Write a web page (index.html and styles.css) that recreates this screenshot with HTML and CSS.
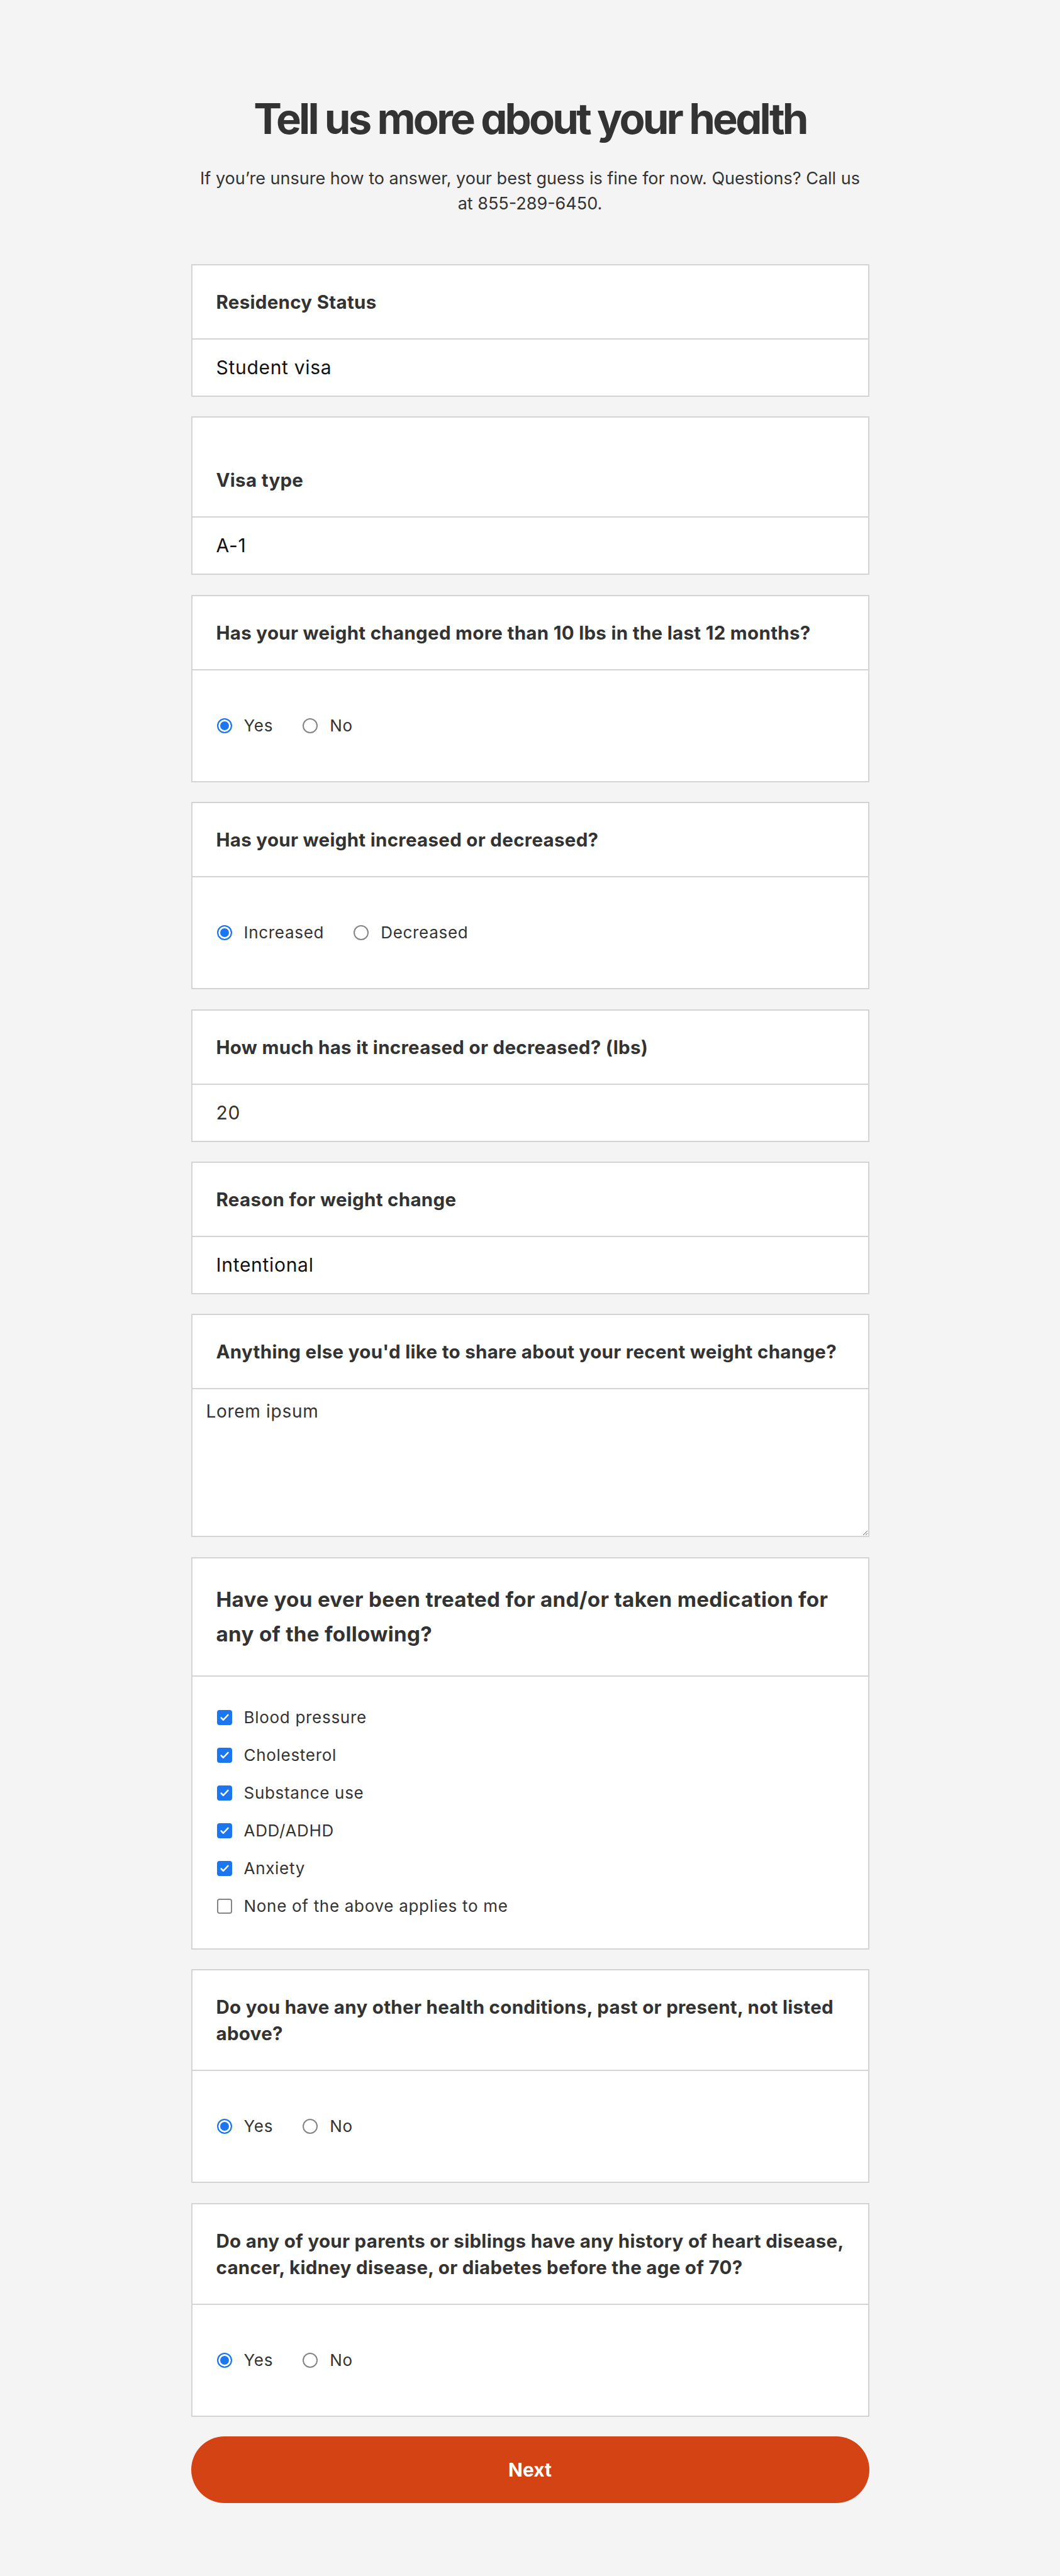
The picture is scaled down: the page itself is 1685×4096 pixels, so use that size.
FILE: index.html
```html
<!DOCTYPE html>
<html lang="en">
<head>
<meta charset="utf-8">
<title>Tell us more about your health</title>
<link rel="stylesheet" href="styles.css">
</head>
<body>
<main class="page">
  <header class="intro">
    <h1 class="title">Tell us more about your health</h1>
    <p class="subtitle">If you’re unsure how to answer, your best guess is fine for now. Questions? Call us at 855-289-6450.</p>
  </header>
  <form class="form">
    <section class="card">
      <div class="card-head"><h2 class="label">Residency Status</h2></div>
      <div class="value">Student visa</div>
    </section>
    <section class="card">
      <div class="card-head card-head--tall"><h2 class="label">Visa type</h2></div>
      <div class="value">A-1</div>
    </section>
    <section class="card">
      <div class="card-head"><h2 class="label">Has your weight changed more than 10 lbs in the last 12 months?</h2></div>
      <div class="choices">
        <label class="choice"><span class="radio is-on"></span>Yes</label>
        <label class="choice"><span class="radio"></span>No</label>
      </div>
    </section>
    <section class="card">
      <div class="card-head"><h2 class="label">Has your weight increased or decreased?</h2></div>
      <div class="choices">
        <label class="choice"><span class="radio is-on"></span>Increased</label>
        <label class="choice"><span class="radio"></span>Decreased</label>
      </div>
    </section>
    <section class="card">
      <div class="card-head"><h2 class="label">How much has it increased or decreased? (lbs)</h2></div>
      <div class="value value--num">20</div>
    </section>
    <section class="card">
      <div class="card-head"><h2 class="label">Reason for weight change</h2></div>
      <div class="value">Intentional</div>
    </section>
    <section class="card">
      <div class="card-head"><h2 class="label">Anything else you'd like to share about your recent weight change?</h2></div>
      <textarea class="note">Lorem ipsum</textarea>
    </section>
    <section class="card">
      <div class="card-head card-head--lg"><h2 class="label label--lg">Have you ever been treated for and/or taken medication for any of the following?</h2></div>
      <div class="checks">
        <label class="choice"><span class="box is-on"><svg viewBox="0 0 24 24" width="20" height="20"><path d="M5.5 12.5l4 4L18.5 7" fill="none" stroke="#fff" stroke-width="3" stroke-linecap="round" stroke-linejoin="round"/></svg></span>Blood pressure</label>
        <label class="choice"><span class="box is-on"><svg viewBox="0 0 24 24" width="20" height="20"><path d="M5.5 12.5l4 4L18.5 7" fill="none" stroke="#fff" stroke-width="3" stroke-linecap="round" stroke-linejoin="round"/></svg></span>Cholesterol</label>
        <label class="choice"><span class="box is-on"><svg viewBox="0 0 24 24" width="20" height="20"><path d="M5.5 12.5l4 4L18.5 7" fill="none" stroke="#fff" stroke-width="3" stroke-linecap="round" stroke-linejoin="round"/></svg></span>Substance use</label>
        <label class="choice"><span class="box is-on"><svg viewBox="0 0 24 24" width="20" height="20"><path d="M5.5 12.5l4 4L18.5 7" fill="none" stroke="#fff" stroke-width="3" stroke-linecap="round" stroke-linejoin="round"/></svg></span>ADD/ADHD</label>
        <label class="choice"><span class="box is-on"><svg viewBox="0 0 24 24" width="20" height="20"><path d="M5.5 12.5l4 4L18.5 7" fill="none" stroke="#fff" stroke-width="3" stroke-linecap="round" stroke-linejoin="round"/></svg></span>Anxiety</label>
        <label class="choice"><span class="box"></span>None of the above applies to me</label>
      </div>
    </section>
    <section class="card">
      <div class="card-head"><h2 class="label">Do you have any other health conditions, past or present, not listed above?</h2></div>
      <div class="choices">
        <label class="choice"><span class="radio is-on"></span>Yes</label>
        <label class="choice"><span class="radio"></span>No</label>
      </div>
    </section>
    <section class="card">
      <div class="card-head"><h2 class="label">Do any of your parents or siblings have any history of heart disease, cancer, kidney disease, or diabetes before the age of 70?</h2></div>
      <div class="choices">
        <label class="choice"><span class="radio is-on"></span>Yes</label>
        <label class="choice"><span class="radio"></span>No</label>
      </div>
    </section>
    <button type="button" class="next">Next</button>
  </form>
</main>
</body>
</html>
```

FILE: styles.css
```css
* { box-sizing: border-box; }
html, body { margin: 0; background: #f4f4f4; }
body { font-family: Inter, "Noto Sans", sans-serif; color: #333; }

.page { width: 1078px; margin: 0 auto; padding: 149px 0 110px; }

.intro { text-align: center; }
.title { margin: 0; font-size: 67px; line-height: 80px; font-weight: 700; letter-spacing: -3.8px; color: #333; font-feature-settings: "cv11" 1; }
.subtitle { margin: 35px 0 0; font-size: 27px; line-height: 40px; color: #333; }

.form { margin-top: 76px; display: flex; flex-direction: column; gap: 31.4px; }

.card { background: #fff; border: 2px solid #d4d4d4; }
.card-head { padding: 37px 20px 37px 38px; border-bottom: 2px solid #d4d4d4; }
.card-head--tall { padding-top: 78px; }
.card-head--lg { padding-top: 38px; padding-bottom: 38px; }

.label { margin: 0; font-size: 29.5px; line-height: 42px; font-weight: 700; letter-spacing: 0.3px; color: #333; }
.label--lg { font-size: 33.2px; line-height: 55px; }

.value { padding: 23px 38px 24px; font-size: 30px; line-height: 42px; letter-spacing: 0.7px; color: #111; }
.value--num { color: #333; }

.choices { display: flex; gap: 47px; padding: 67px 39px; }
.choice { display: flex; align-items: center; gap: 19px; font-size: 26px; line-height: 42px; letter-spacing: 0.7px; color: #333; }

.radio { flex: none; width: 24px; height: 24px; border-radius: 50%; border: 2px solid #858585; background: #fff; }
.radio.is-on { border-color: #1b76f0; background: #1b76f0; box-shadow: inset 0 0 0 3px #fff; }

.checks { display: flex; flex-direction: column; gap: 18px; padding: 44px 39px 46px; }
.box { flex: none; width: 24px; height: 24px; border-radius: 4px; border: 2px solid #858585; display: flex; align-items: center; justify-content: center; background: #fff; }
.box.is-on { background: #1b76f0; border-color: #1b76f0; }

.note { display: block; width: 100%; height: 233px; margin: 0; border: 0; padding: 14px 22px; font-family: Inter, sans-serif; font-size: 28px; line-height: 42px; letter-spacing: 0.7px; color: #333; resize: vertical; background: #fff; }

.next { display: block; width: 100%; height: 106px; margin: 0; border: 0; border-radius: 53px; background: #d44314; color: #fff; font-family: Inter, sans-serif; font-weight: 700; font-size: 30px; cursor: pointer; }
```
